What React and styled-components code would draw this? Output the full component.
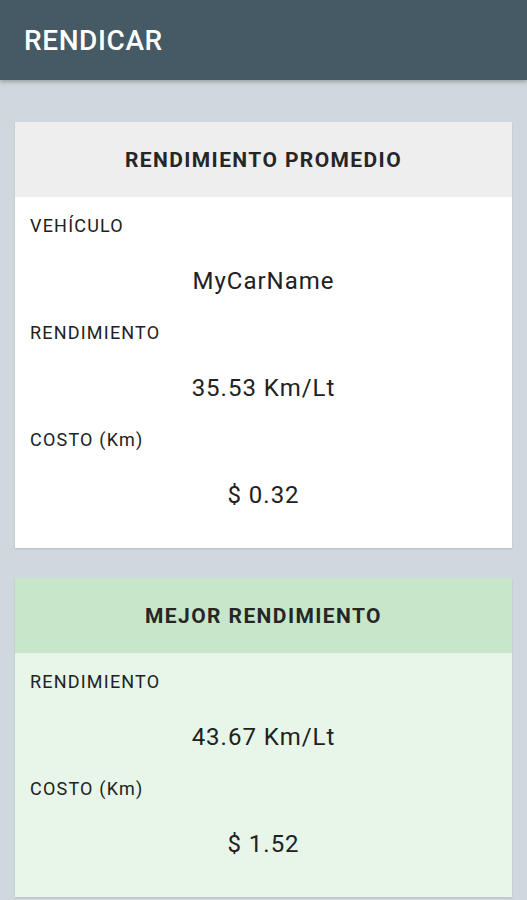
import styled, { createGlobalStyle } from 'styled-components';

const GlobalStyle = createGlobalStyle`
  html, body {
    margin: 0;
    padding: 0;
    background: #cfd8dc;
    font-family: Roboto, "Noto Sans", "Liberation Sans", sans-serif;
  }
`;

const Page = styled.div`
  min-height: 900px;
  background: #cfd8dc;
`;

const AppBar = styled.header`
  height: 80px;
  background: #455a64;
  display: flex;
  align-items: center;
  padding: 0 24px;
  box-shadow: 0 2px 4px rgba(0, 0, 0, 0.25);
  position: relative;
`;

const Title = styled.h1`
  margin: 0;
  color: #ffffff;
  font-size: 28px;
  font-weight: 500;
  letter-spacing: 0.6px;
`;

const Content = styled.main`
  display: flex;
  flex-direction: column;
  gap: 30px;
  padding: 42px 15px 0;
`;

const Card = styled.section`
  background: ${({ $bg }) => $bg};
  box-shadow: 0 1px 2px rgba(0, 0, 0, 0.12);
`;

const CardHeader = styled.div`
  height: 75px;
  display: flex;
  align-items: center;
  justify-content: center;
  background: ${({ $bg }) => $bg};
  color: #262626;
  font-size: 21px;
  font-weight: 700;
  letter-spacing: 1.4px;
`;

const CardBody = styled.div`
  padding: 18px 15px 12px;
`;

const Label = styled.div`
  font-size: 18px;
  line-height: 22px;
  letter-spacing: 1.2px;
  color: #212121;
`;

const Value = styled.div`
  margin: 29px 0 26px;
  font-size: 24px;
  line-height: 30px;
  letter-spacing: 1px;
  color: #212121;
  text-align: center;
`;

const cards = [
  {
    id: 1,
    title: 'RENDIMIENTO PROMEDIO',
    headerBg: '#eeeeee',
    bodyBg: '#ffffff',
    fields: [
      { label: 'VEHÍCULO', value: 'MyCarName' },
      { label: 'RENDIMIENTO', value: '35.53 Km/Lt' },
      { label: 'COSTO (Km)', value: '$ 0.32' },
    ],
  },
  {
    id: 2,
    title: 'MEJOR RENDIMIENTO',
    headerBg: '#c8e6c9',
    bodyBg: '#e8f5e9',
    fields: [
      { label: 'RENDIMIENTO', value: '43.67 Km/Lt' },
      { label: 'COSTO (Km)', value: '$ 1.52' },
    ],
  },
];

export default function App() {
  return (
    <Page>
      <GlobalStyle />
      <AppBar>
        <Title>RENDICAR</Title>
      </AppBar>
      <Content>
        {cards.map(({ id, title, headerBg, bodyBg, fields }) => (
          <Card key={id} $bg={bodyBg}>
            <CardHeader $bg={headerBg}>{title}</CardHeader>
            <CardBody>
              {fields.map(({ label, value }) => (
                <div key={label}>
                  <Label>{label}</Label>
                  <Value>{value}</Value>
                </div>
              ))}
            </CardBody>
          </Card>
        ))}
      </Content>
    </Page>
  );
}
